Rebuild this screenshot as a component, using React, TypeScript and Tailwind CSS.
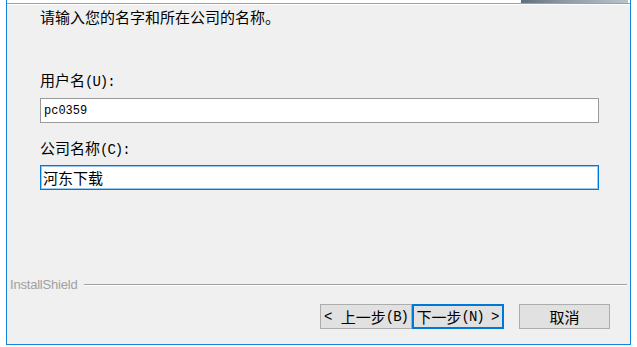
import React from "react";

const cjk = { fontFamily: '"Noto Sans CJK SC", "Microsoft YaHei", sans-serif' };
const mono = { fontFamily: '"Liberation Mono", "DejaVu Sans Mono", monospace' };

function M({ children }: { children: React.ReactNode }) {
  return (
    <span className="text-[14px] tracking-[-1px]" style={mono}>
      {children}
    </span>
  );
}

export default function App() {
  return (
    <div className="w-[637px] h-[347px] bg-white pl-[6px] overflow-hidden">
      <div className="w-[625px] h-[345px] border-x border-b border-[#1883d7] flex flex-col" style={cjk}>
        {/* header strip */}
        <div className="h-[3px] bg-white flex justify-end pr-[2px]">
          <div className="w-[107px] h-[3px] bg-[linear-gradient(90deg,#5f6f7c,#8d9aa4_40%,#b9c3ca)]" />
        </div>
        <div className="h-px bg-[#a0a0a0]" />
        <div className="h-px bg-white" />
        {/* body */}
        <div className="flex-1 bg-[#f0f0f0] flex flex-col text-[15px] leading-[20px] text-black">
          <div className="mt-[2px] pl-[33px]">请输入您的名字和所在公司的名称。</div>
          <div className="mt-[43px] pl-[33px]">
            用户名<M>(U):</M>
          </div>
          <div className="mt-[6px] ml-[33px] w-[559px] h-[25px] border border-[#9a9a9a] bg-white flex items-center pl-[3px]">
            <span className="text-[12px] text-black" style={mono}>pc0359</span>
          </div>
          <div className="mt-[15px] pl-[33px]">
            公司名称<M>(C):</M>
          </div>
          <div className="mt-[5px] ml-[33px] w-[559px] h-[25px] border border-[#0078d7] bg-white flex items-center pl-[2px] shadow-[inset_0_0_0_1px_#9cc8ee]">
            <span>河东下载</span>
          </div>
          <div className="flex-1" />
          <div className="h-[14px] flex items-center pl-[3px] pr-[3px]">
            <span className="text-[13px] text-[#a0a0a0] tracking-[-0.2px]" style={{ fontFamily: '"Liberation Sans", Arial, sans-serif' }}>
              InstallShield
            </span>
            <div className="flex-1 ml-[6px] flex flex-col">
              <div className="h-px bg-[#a0a0a0]" />
              <div className="h-px bg-white" />
            </div>
          </div>
          <div className="mt-[12px] mb-[15px] flex justify-end pr-[20px] h-[25px]">
            <div className="w-[92px] h-[25px] border border-[#adadad] bg-[#e1e1e1] flex items-center justify-center leading-none whitespace-pre">
              <span className="text-[14px]" style={mono}>{"<\u00a0"}</span>上一步<M>(B)</M>
            </div>
            <div className="w-[92px] h-[25px] border-2 border-[#0078d7] bg-[#e1e1e1] flex items-center justify-center leading-none whitespace-pre">
              下一步<M>{"(N)\u00a0"}</M><span className="text-[14px]" style={mono}>&gt;</span>
            </div>
            <div className="ml-[15px] w-[91px] h-[25px] border border-[#adadad] bg-[#e1e1e1] flex items-center justify-center leading-none">
              取消
            </div>
          </div>
        </div>
      </div>
    </div>
  );
}
